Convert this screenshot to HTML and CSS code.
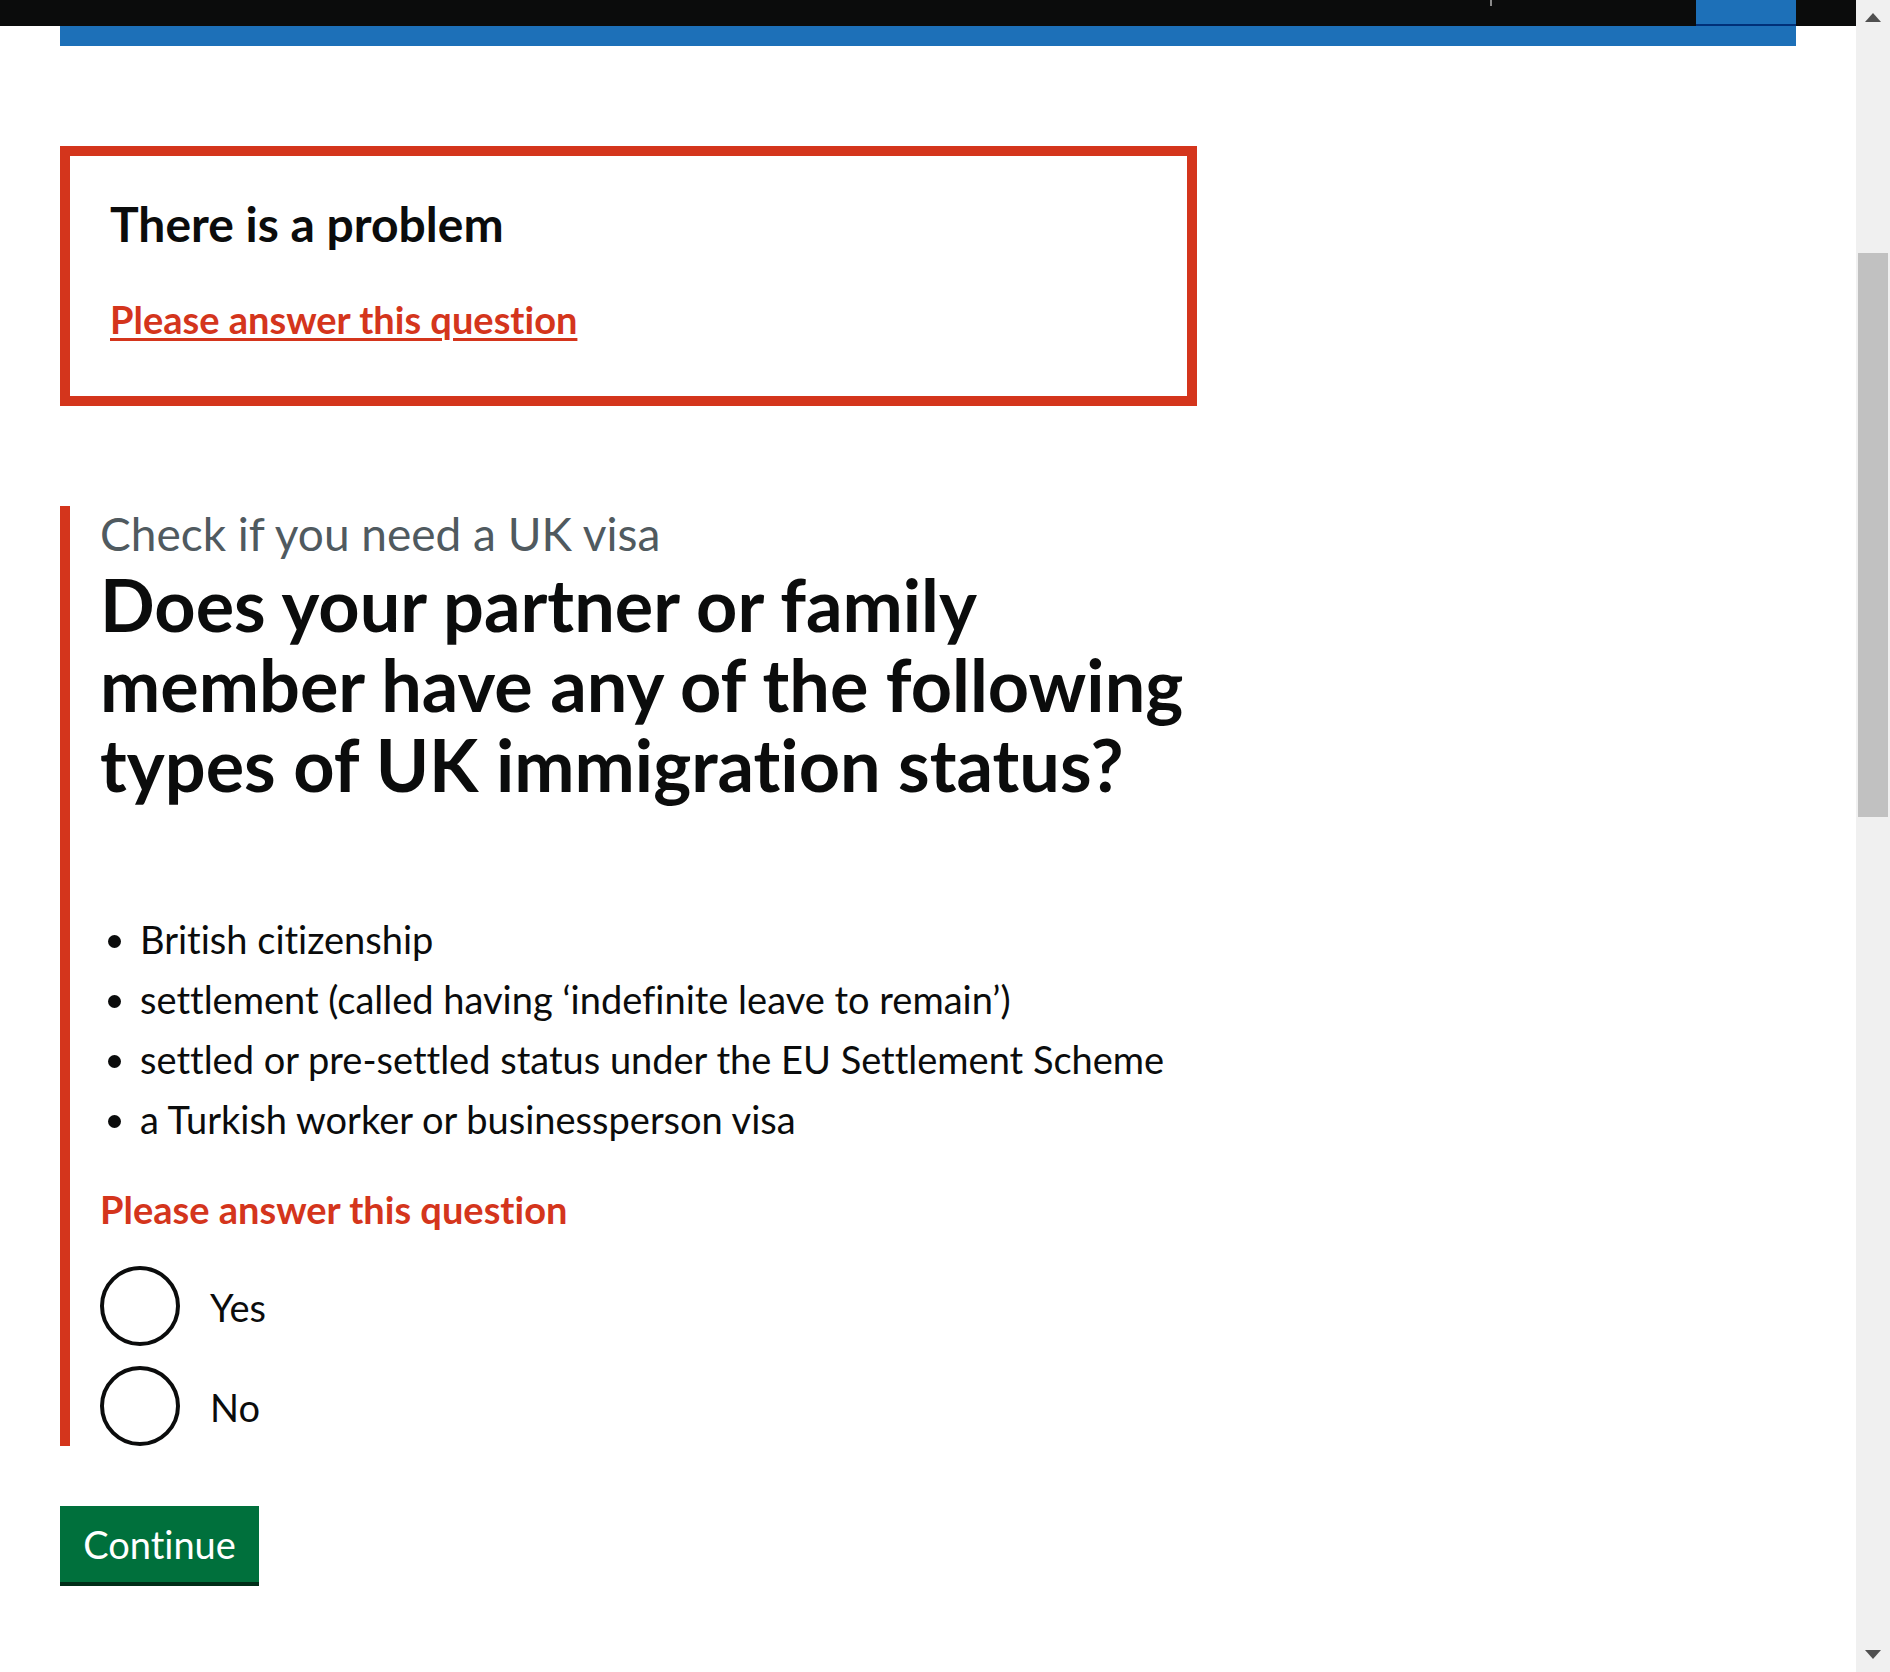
FILE: index.html
```html
<!DOCTYPE html>
<html lang="en">
<head>
<meta charset="utf-8">
<title>Check if you need a UK visa</title>
<link rel="stylesheet" href="styles.css">
</head>
<body>
<div class="viewport">
  <div class="page">
    <header class="header">
      <div class="header-inner">
        <span class="header-tick"></span>
        <span class="header-active"></span>
      </div>
    </header>
    <div class="container">
      <div class="header-rule"></div>
      <main class="main">
        <div class="column">
          <div class="error-summary">
            <h2 class="error-summary-title">There is a problem</h2>
            <ul class="error-summary-list">
              <li><a href="#answer">Please answer this question</a></li>
            </ul>
          </div>
          <div class="form-group">
            <fieldset class="fieldset">
              <legend class="legend">
                <span class="caption">Check if you need a UK visa</span>
                <h1 class="heading">Does your partner or family member have any of the following types of UK immigration status?</h1>
              </legend>
              <ul class="bullets">
                <li>British citizenship</li>
                <li>settlement (called having ‘indefinite leave to remain’)</li>
                <li>settled or pre-settled status under the EU Settlement Scheme</li>
                <li>a Turkish worker or businessperson visa</li>
              </ul>
              <p class="error-message" id="answer">Please answer this question</p>
              <div class="radios">
                <label class="radio"><span class="circle"></span><span class="radio-label">Yes</span></label>
                <label class="radio"><span class="circle"></span><span class="radio-label">No</span></label>
              </div>
            </fieldset>
          </div>
          <button class="button" type="button">Continue</button>
        </div>
      </main>
    </div>
  </div>
  <div class="scrollbar">
    <span class="sb-up"></span>
    <span class="sb-thumb"></span>
    <span class="sb-down"></span>
  </div>
</div>
</body>
</html>
```
FILE: styles.css
```css
* { box-sizing: border-box; }
html, body { margin: 0; padding: 0; }
body {
  font-family: Lato, "Liberation Sans", Arial, sans-serif;
  font-variant-ligatures: none;
  color: #0b0c0c;
  background: #fff;
  overflow: hidden;
}
.viewport { display: flex; width: 1890px; height: 1672px; }
.page { flex: 1; min-width: 0; }

.header { background: #0b0c0c; height: 26px; }
.header-inner {
  margin: 0 60px;
  height: 26px;
  display: flex;
  justify-content: flex-end;
  align-items: flex-start;
}
.header-tick { width: 2px; height: 6px; background: #8a8a8a; margin-right: 204px; }
.header-active { width: 100px; height: 26px; background: #1d70b8; border-bottom: 2px solid #003078; }

.container { margin: 0 60px; }
.header-rule { height: 20px; background: #1d70b8; }
.main { padding-top: 100px; }
.column { width: 1137px; }

.error-summary { border: 10px solid #d4351c; padding: 38px 40px 42px; margin-bottom: 100px; }
.error-summary-title { font-size: 48px; line-height: 60px; font-weight: 700; margin: 0 0 40px; }
.error-summary-list { list-style: none; margin: 0; padding: 0; }
.error-summary-list li { font-size: 38px; line-height: 50px; margin-bottom: 10px; font-weight: 700; }
.error-summary-list a {
  color: #d4351c;
  text-decoration: underline;
  text-decoration-thickness: 3px;
  text-underline-offset: 4px;
}

.form-group { border-left: 10px solid #d4351c; padding-left: 30px; margin-bottom: 60px; }
.fieldset { margin: 0; padding: 0; border: 0; min-width: 0; }
.legend { padding: 0; margin: 0; width: 100%; }
.caption { display: block; font-size: 46px; line-height: 50px; color: #505a5f; padding-top: 3px; margin-bottom: 5px; }
.heading { font-size: 72px; line-height: 80px; font-weight: 700; margin: 0 0 110px; }

.bullets { margin: 0 0 40px; padding-left: 40px; list-style: disc; font-size: 38px; line-height: 50px; }
.bullets li { margin-bottom: 10px; }

.error-message { color: #d4351c; font-weight: 700; font-size: 38px; line-height: 50px; margin: 0 0 32px; }

.radios { display: flex; flex-direction: column; gap: 20px; }
.radio { display: flex; align-items: flex-start; min-height: 80px; }
.circle { width: 80px; height: 80px; border: 4px solid #0b0c0c; border-radius: 50%; flex: none; }
.radio-label { font-size: 38px; line-height: 50px; padding: 16px 30px 10px; }

.button {
  display: block;
  font-family: inherit;
  font-variant-ligatures: none;
  font-size: 38px;
  line-height: 38px;
  color: #fff;
  background: #00703c;
  border: 0;
  border-radius: 0;
  box-shadow: 0 4px 0 #002d18;
  width: 199px;
  padding: 19px 0 19px;
  text-align: center;
  margin: 0;
}

.scrollbar {
  width: 34px;
  flex: none;
  background: #f0f0f0;
  display: flex;
  flex-direction: column;
  align-items: center;
}
.sb-up {
  margin-top: 13px;
  width: 0; height: 0;
  border-left: 8px solid transparent;
  border-right: 8px solid transparent;
  border-bottom: 9px solid #505050;
}
.sb-thumb { margin-top: 231px; width: 30px; height: 564px; background: #c1c1c1; }
.sb-down {
  margin-top: auto;
  margin-bottom: 13px;
  width: 0; height: 0;
  border-left: 8px solid transparent;
  border-right: 8px solid transparent;
  border-top: 9px solid #505050;
}
```
